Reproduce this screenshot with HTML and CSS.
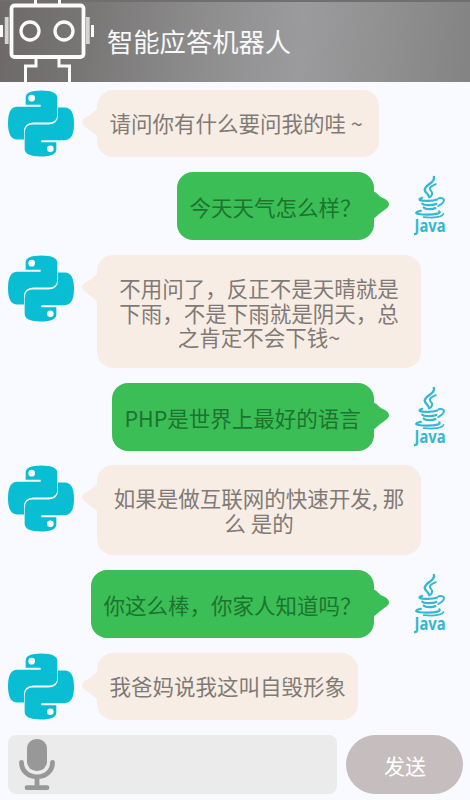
FILE: index.html
```html
<!DOCTYPE html>
<html lang="zh-CN">
<head>
<meta charset="utf-8">
<title>智能应答机器人</title>
<link rel="stylesheet" href="styles.css">
</head>
<body>
<svg class="defs" width="0" height="0">
  <symbol id="python" viewBox="24 28 198 200">
    <g id="snake">
      <path d="M77 50Q77 29 124 29Q172 29 172 52V99Q172 125 148 125H100Q72 126 72 152V176H52Q24 176 24 127Q24 78 52 78H122V72H77Z"/>
      <circle cx="95" cy="52" r="10" fill="#f8faff"/>
    </g>
    <use href="#snake" transform="rotate(180 123 128)"/>
  </symbol>
  <symbol id="java" viewBox="0 0 34 62">
    <g fill="none" stroke="#35b7cf" stroke-linecap="round">
      <path stroke-width="2.400" d="M20.500 1C22.500 7 11 9 11 14.500C11.300 17.500 15.500 18.500 15.500 22"/>
      <path stroke-width="2" d="M22.500 8.500C17 10.500 15 12.500 17.500 15.500C19.800 18 18.500 20 17 21.500"/>
      <path stroke-width="2.200" d="M8.500 22.500C3 24.500 6 25.800 14 25.700C19 25.600 22 25 24 24.200"/>
      <path stroke-width="2" d="M25.500 23C32.500 21.500 33 27 25 31"/>
      <path stroke-width="2.300" d="M8.500 28.500C10 30.600 19 30.400 23 28.900M10 32.600C12 34.800 19 34.600 22 33.200"/>
      <path stroke-width="2.300" d="M7 36C-1 37.800 1 40 14 39.900C23 39.800 28 38.300 26 36.600"/>
      <path stroke-width="1.700" d="M10 42.500C20 43.500 29 42.500 30.500 39"/>
    </g>
    <text x="0.500" y="58" textLength="32" lengthAdjust="spacingAndGlyphs">Java</text>
  </symbol>
  <symbol id="tail" viewBox="0 0 16 28">
    <path d="M16 0Q12 1.500 10 4.500Q8 6.500 5 7.500Q0 10 0 13.500Q0 16 4 18.500L10 23Q13 26 16 28Z"/>
  </symbol>
</svg>
<header class="header">
  <svg class="robot" viewBox="0 0 96 82" fill="none" stroke="#fbfbfb">
    <path stroke-width="3" d="M35.500 0V4.500M59.500 0V4.500M36 58V66H25.500V82M59 58V66H69.500V82"/>
    <rect x="11.500" y="5.500" width="72" height="51.500" rx="3" stroke-width="3.800"/>
    <circle cx="30" cy="31" r="9" stroke-width="3.300"/>
    <circle cx="64" cy="31" r="9" stroke-width="3.300"/>
    <path stroke="#d6d4d3" stroke-width="3.800" d="M6.700 17V44M87.800 17V44"/>
    <path stroke-width="3" d="M1.500 25V37M92.500 25V37"/>
  </svg>
  <h1 class="title">智能应答机器人</h1>
</header>
<main class="chat">
  <div class="row">
    <svg class="python"><use href="#python"/></svg>
    <div class="bubble bot b1"><svg class="tail"><use href="#tail"/></svg>请问你有什么要问我的哇 ~</div>
  </div>
  <div class="row me">
    <div class="bubble user b2"><svg class="tail"><use href="#tail"/></svg>今天天气怎么样？</div>
    <svg class="java"><use href="#java"/></svg>
  </div>
  <div class="row">
    <svg class="python"><use href="#python"/></svg>
    <div class="bubble bot wide b3"><svg class="tail"><use href="#tail"/></svg>不用问了，反正不是天晴就是<br>下雨，不是下雨就是阴天，总<br>之肯定不会下钱~</div>
  </div>
  <div class="row me">
    <div class="bubble user b4"><svg class="tail"><use href="#tail"/></svg>PHP是世界上最好的语言</div>
    <svg class="java"><use href="#java"/></svg>
  </div>
  <div class="row pulled">
    <svg class="python"><use href="#python"/></svg>
    <div class="bubble bot wide b5"><svg class="tail"><use href="#tail"/></svg>如果是做互联网的快速开发, 那<br>么 是的</div>
  </div>
  <div class="row me">
    <div class="bubble user b6"><svg class="tail"><use href="#tail"/></svg>你这么棒，你家人知道吗？</div>
    <svg class="java"><use href="#java"/></svg>
  </div>
  <div class="row">
    <svg class="python"><use href="#python"/></svg>
    <div class="bubble bot b7"><svg class="tail"><use href="#tail"/></svg>我爸妈说我这叫自毁形象</div>
  </div>
</main>
<footer class="composer">
  <div class="field">
    <svg class="mic" viewBox="0 0 36 52" fill="none" stroke="#989899" stroke-linecap="round">
      <rect x="8" y="0" width="20" height="32" rx="9.500" fill="#989899" stroke="none"/>
      <path stroke-width="4.800" d="M2.500 23.500C2.500 32 9 37.800 18 37.800S33.500 32 33.500 23.500M18 38V48M8 48.700H28"/>
    </svg>
  </div>
  <button class="send">发送</button>
</footer>
</body>
</html>
```
FILE: styles.css
```css
* {
  box-sizing: border-box;
}

body {
  margin: 0;
  height: 800px;
  overflow: hidden;
  background: #f8faff;
  font-family: "Noto Sans CJK SC", sans-serif;
  font-weight: 400;
}

.defs {
  position: absolute;
}

.header {
  display: flex;
  align-items: center;
  height: 82px;
  border-top: 2px solid #706e6e;
  background: linear-gradient(96deg, #6c6968 0%, #787675 18%, #8d8c8d 42%, #9b9b9d 64%, #919192 80%, #838383 100%);
}

.robot {
  width: 96px;
  height: 82px;
  margin-top: -2px;
}

.title {
  margin: -3px 0 0 11px;
  color: #f8f8f8;
  font-size: 26.3px;
  font-weight: 400;
  line-height: 40px;
}

.chat {
  display: flex;
  flex-direction: column;
  gap: 15px;
  padding: 8px 0 15px 8px;
}

.row {
  display: flex;
  align-items: flex-start;
  gap: 23px;
}

.pulled {
  margin-top: -1px;
}

.me {
  justify-content: flex-end;
  padding-right: 23px;
  gap: 40px;
}

.python {
  width: 66px;
  height: 67px;
  fill: #09bdd3;
}

.java {
  width: 33px;
  height: 62px;
  margin-top: 3px;
  fill: #35b7cf;
  font: 700 18px "Noto Sans", sans-serif;
}

.bubble {
  position: relative;
  display: flow-root;
  height: 67px;
  padding: 21px 0 0 12.5px;
  border-radius: 16px;
  font-size: 21.5px;
  line-height: 24.6px;
  white-space: nowrap;
}

.bot {
  background: #f8ede5;
  color: #7f7a77;
}

.user {
  height: 68px;
  padding-top: 23px;
  background: #3bbe55;
  color: #1c7430;
}

.wide {
  width: 324px;
  padding-left: 0;
  text-align: center;
}

.b1 { width: 282px; }
.b2 { width: 197px; }
.b3 { height: 113px; }
.b4 { width: 262px; }
.b5 { height: 90px; }
.b6 { width: 283px; }
.b7 { width: 261px; }

.tail {
  position: absolute;
  top: 19px;
  left: -15px;
  width: 16px;
  height: 28px;
  fill: #f8ede5;
}

.user .tail {
  left: auto;
  right: -15px;
  fill: #3bbe55;
  transform: scaleX(-1);
}

.composer {
  display: flex;
  gap: 9px;
  padding-left: 8px;
}

.field {
  width: 329px;
  height: 59px;
  padding: 4px 0 0 11px;
  border-radius: 8px;
  background: #ebebeb;
}

.mic {
  display: block;
  width: 36px;
  height: 52px;
}

.send {
  width: 117px;
  height: 59px;
  padding: 0 0 0 1px;
  border: 0;
  border-radius: 30px;
  background: #c5bdbe;
  color: #fff;
  font: 400 21px "Noto Sans CJK SC", sans-serif;
}
```
